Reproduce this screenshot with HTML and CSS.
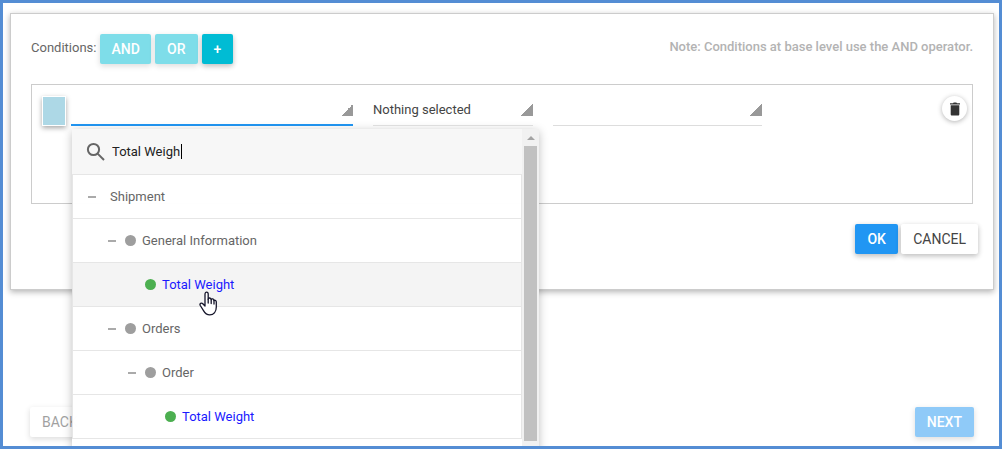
FILE: index.html
```html
<!DOCTYPE html>
<html lang="en">
<head>
<meta charset="utf-8">
<title>Conditions</title>
<link rel="stylesheet" href="styles.css">
</head>
<body>
<div class="frame">
  <main class="card">
    <header class="toolbar">
      <span class="toolbar-label">Conditions:</span>
      <button class="btn btn-cyan muted" type="button">AND</button>
      <button class="btn btn-cyan muted" type="button">OR</button>
      <button class="btn btn-cyan btn-compact" type="button" aria-label="Add condition">+</button>
      <p class="note">Note: Conditions at base level use the AND operator.</p>
    </header>

    <section class="group">
      <button class="swatch" type="button" aria-label="Condition colour"></button>
      <div class="field field-wide">
        <select class="picker active" aria-label="Attribute"><option></option></select>
        <div class="dropdown">
          <div class="dropdown-list">
            <label class="search">
              <svg class="search-icon" viewBox="0 0 20 20" aria-hidden="true"><circle cx="7.5" cy="7.5" r="5.6"/><path d="M11.6 11.6l6.4 6.4"/></svg>
              <input class="search-input" type="text" value="Total Weigh" aria-label="Search"><span class="caret"></span>
            </label>
            <ul class="tree">
              <li class="row root"><button class="toggle" type="button" aria-label="Collapse Shipment"></button><span>Shipment</span></li>
              <li class="row level-1"><button class="toggle" type="button" aria-label="Collapse General Information"></button><i class="dot"></i><span>General Information</span></li>
              <li class="row level-2 hovered"><i class="spacer"></i><i class="dot leaf"></i><a class="match" href="#">Total Weight<svg class="pointer" viewBox="0 0 18 25" aria-hidden="true"><path d="M6 15V3.200C6 .4 9.200.4 9.200 3.200V8.200C9.500 6.500 12 6.600 12.200 8.600C12.800 7.400 14.800 7.800 15 9.500C16 8.900 17.300 9.600 17.300 11V16C17.300 21 14.500 23.800 10.800 23.800C7.500 23.800 6 22.300 4.500 19.600L1.300 14.500C.2 12.600 2.500 11.300 3.800 12.700Z"/><path d="M9.200 8.200V12M12.200 8.600V12.500M15 9.500V13"/></svg></a></li>
              <li class="row level-1"><button class="toggle" type="button" aria-label="Collapse Orders"></button><i class="dot"></i><span>Orders</span></li>
              <li class="row level-2"><button class="toggle" type="button" aria-label="Collapse Order"></button><i class="dot"></i><span>Order</span></li>
              <li class="row level-3"><i class="spacer"></i><i class="dot leaf"></i><a class="match" href="#">Total Weight</a></li>
            </ul>
          </div>
          <div class="scrollbar"><i class="scroll-up"></i><i class="scroll-thumb"></i></div>
        </div>
      </div>
      <div class="field field-small">
        <select class="picker" aria-label="Operator"><option>Nothing selected</option></select>
      </div>
      <div class="field field-medium">
        <select class="picker" aria-label="Value"><option></option></select>
      </div>
      <button class="delete" type="button" aria-label="Delete condition">
        <svg viewBox="0 0 12 14" aria-hidden="true"><path d="M1 1.200h3L4.700.5h2.600L8 1.200h3v1.300H1zM1.700 3.200h8.600v9c0 .7-.5 1.300-1.200 1.300H2.900c-.7 0-1.200-.6-1.200-1.300z"/></svg>
      </button>
    </section>

    <div class="actions">
      <button class="btn btn-blue" type="button">OK</button>
      <button class="btn btn-plain" type="button">CANCEL</button>
    </div>
  </main>

  <footer class="pager">
    <button class="btn btn-plain faded" type="button">BACK</button>
    <button class="btn btn-blue faded" type="button">NEXT</button>
  </footer>
</div>
</body>
</html>
```
FILE: styles.css
```css
* {
  box-sizing: border-box;
}

body {
  margin: 0;
  font: 13px/20px Roboto, "Liberation Sans", sans-serif;
  color: #666;
  background: #fff;
}

button,
input,
select {
  font: inherit;
}

.frame {
  display: flex;
  flex-direction: column;
  justify-content: space-between;
  height: 100vh;
  padding: 10px 5px 9px 7px;
  border: 3px solid #548dd4;
  overflow: hidden;
}

.card {
  position: relative;
  z-index: 1;
  padding: 20px 20px 35px;
  border: 1px solid #ccc;
  background: #fff;
  box-shadow: 0 2px 6px rgba(0, 0, 0, .3);
}

.toolbar {
  display: flex;
  align-items: center;
  gap: 4px;
}

.toolbar-label {
  margin-bottom: 2px;
}

.note {
  margin: 0 0 4px auto;
  font-weight: 500;
  color: #b3b3b3;
}

.btn {
  min-width: 43px;
  height: 30px;
  padding: 0 12px;
  border: 0;
  border-radius: 2px;
  font-size: 14px;
  line-height: 20px;
  box-shadow: 0 2px 5px rgba(0, 0, 0, .16), 0 2px 6px rgba(0, 0, 0, .12);
}

.btn-cyan {
  padding: 0 11px;
  background: #00bcd4;
  color: #fff;
  font-weight: 500;
}

.btn-compact {
  min-width: 31px;
}

.btn-blue {
  background: #2196f3;
  color: #fff;
  font-weight: 500;
}

.btn-plain {
  background: #fff;
  color: #444;
}

.muted,
.faded {
  opacity: .5;
}

.group {
  display: flex;
  align-items: flex-start;
  min-height: 120px;
  margin-top: 20px;
  padding: 11px 5px 10px 10px;
  border: 1px solid #ccc;
}

.swatch {
  width: 24px;
  height: 30px;
  margin-right: 5px;
  padding: 0;
  border: 1px solid #fff;
  background: #add8e6;
  box-shadow: 0 2px 5px rgba(0, 0, 0, .35);
}

.field {
  position: relative;
  margin-right: 20px;
}

.field-wide {
  width: 282px;
}

.field-small {
  width: 160px;
}

.field-medium {
  width: 209px;
}

.picker {
  display: block;
  width: 100%;
  height: 30px;
  padding: 0 20px 2px 0;
  border: 0;
  border-bottom: 1px solid #ddd;
  border-radius: 0;
  outline: 0;
  appearance: none;
  color: #444;
  background: linear-gradient(135deg, transparent 50%, #999 50%) right 8px / 12px 12px no-repeat;
}

.picker.active {
  border-bottom: 2px solid #2196f3;
}

.delete {
  display: flex;
  align-items: center;
  justify-content: center;
  width: 25px;
  height: 25px;
  margin-left: auto;
  padding: 0;
  border: 0;
  border-radius: 50%;
  background: #fff;
  box-shadow: 0 1px 5px rgba(0, 0, 0, .3);
}

.delete svg {
  width: 12px;
  height: 14px;
  fill: #333;
}

.actions {
  display: flex;
  justify-content: flex-end;
  gap: 3px;
  margin: 20px -5px 0 0;
}

.pager {
  display: flex;
  justify-content: space-between;
  padding: 0 20px;
}

.dropdown {
  position: absolute;
  top: calc(100% + 3px);
  left: 1px;
  display: flex;
  width: 467px;
  border-radius: 2px;
  background: rgba(255, 255, 255, .98);
  box-shadow: 0 2px 10px rgba(0, 0, 0, .25);
}

.dropdown-list {
  flex: 1;
  padding-bottom: 12px;
}

.search {
  display: flex;
  align-items: center;
  height: 45px;
  padding-left: 14px;
  background: #f7f7f7;
}

.search-icon {
  width: 20px;
  height: 20px;
  margin-right: 6px;
  fill: none;
  stroke: #666;
  stroke-width: 2;
}

.search-input {
  width: 69px;
  field-sizing: content;
  padding: 0;
  border: 0;
  outline: 0;
  color: #222;
  background: transparent;
}

.caret {
  width: 1px;
  height: 15px;
  background: #000;
}

.tree {
  margin: 0;
  padding: 0;
  border: 1px solid #e6e6e6;
  list-style: none;
}

.row {
  display: flex;
  align-items: center;
  height: 44px;
  padding-left: 15px;
  border-bottom: 1px solid #e6e6e6;
}

.row:last-child {
  height: 43px;
  border-bottom: 0;
}

.level-1 {
  padding-left: 35px;
}

.level-2 {
  padding-left: 55px;
}

.level-3 {
  padding-left: 75px;
}

.hovered {
  background: #f4f4f4;
}

.toggle,
.spacer {
  width: 8px;
  height: 16px;
  margin-right: 9px;
  padding: 0;
  border: 0;
  background: none;
}

.toggle {
  background: linear-gradient(#aaa, #aaa) center / 8px 2px no-repeat;
}

.root .toggle {
  margin-right: 14px;
}

.dot {
  width: 11px;
  height: 11px;
  margin-right: 6px;
  border-radius: 50%;
  background: #9e9e9e;
}

.dot.leaf {
  background: #4caf50;
}

.match {
  position: relative;
  color: #1a1aff;
  text-decoration: none;
}

.pointer {
  position: absolute;
  top: 16px;
  left: 37px;
  width: 18px;
  height: 25px;
  fill: #fff;
  stroke: #15152a;
  stroke-width: 1.3;
  stroke-linejoin: round;
  stroke-linecap: round;
}

.scrollbar {
  display: flex;
  flex-direction: column;
  align-items: center;
  width: 17px;
  padding-bottom: 10px;
  background: #f1f1f1;
}

.scroll-up {
  margin: 7px 0 6px;
  border: 4px solid transparent;
  border-top: 0;
  border-bottom-color: #a3a3a3;
}

.scroll-thumb {
  flex: 1;
  width: 13px;
  background: #c1c1c1;
}
```
